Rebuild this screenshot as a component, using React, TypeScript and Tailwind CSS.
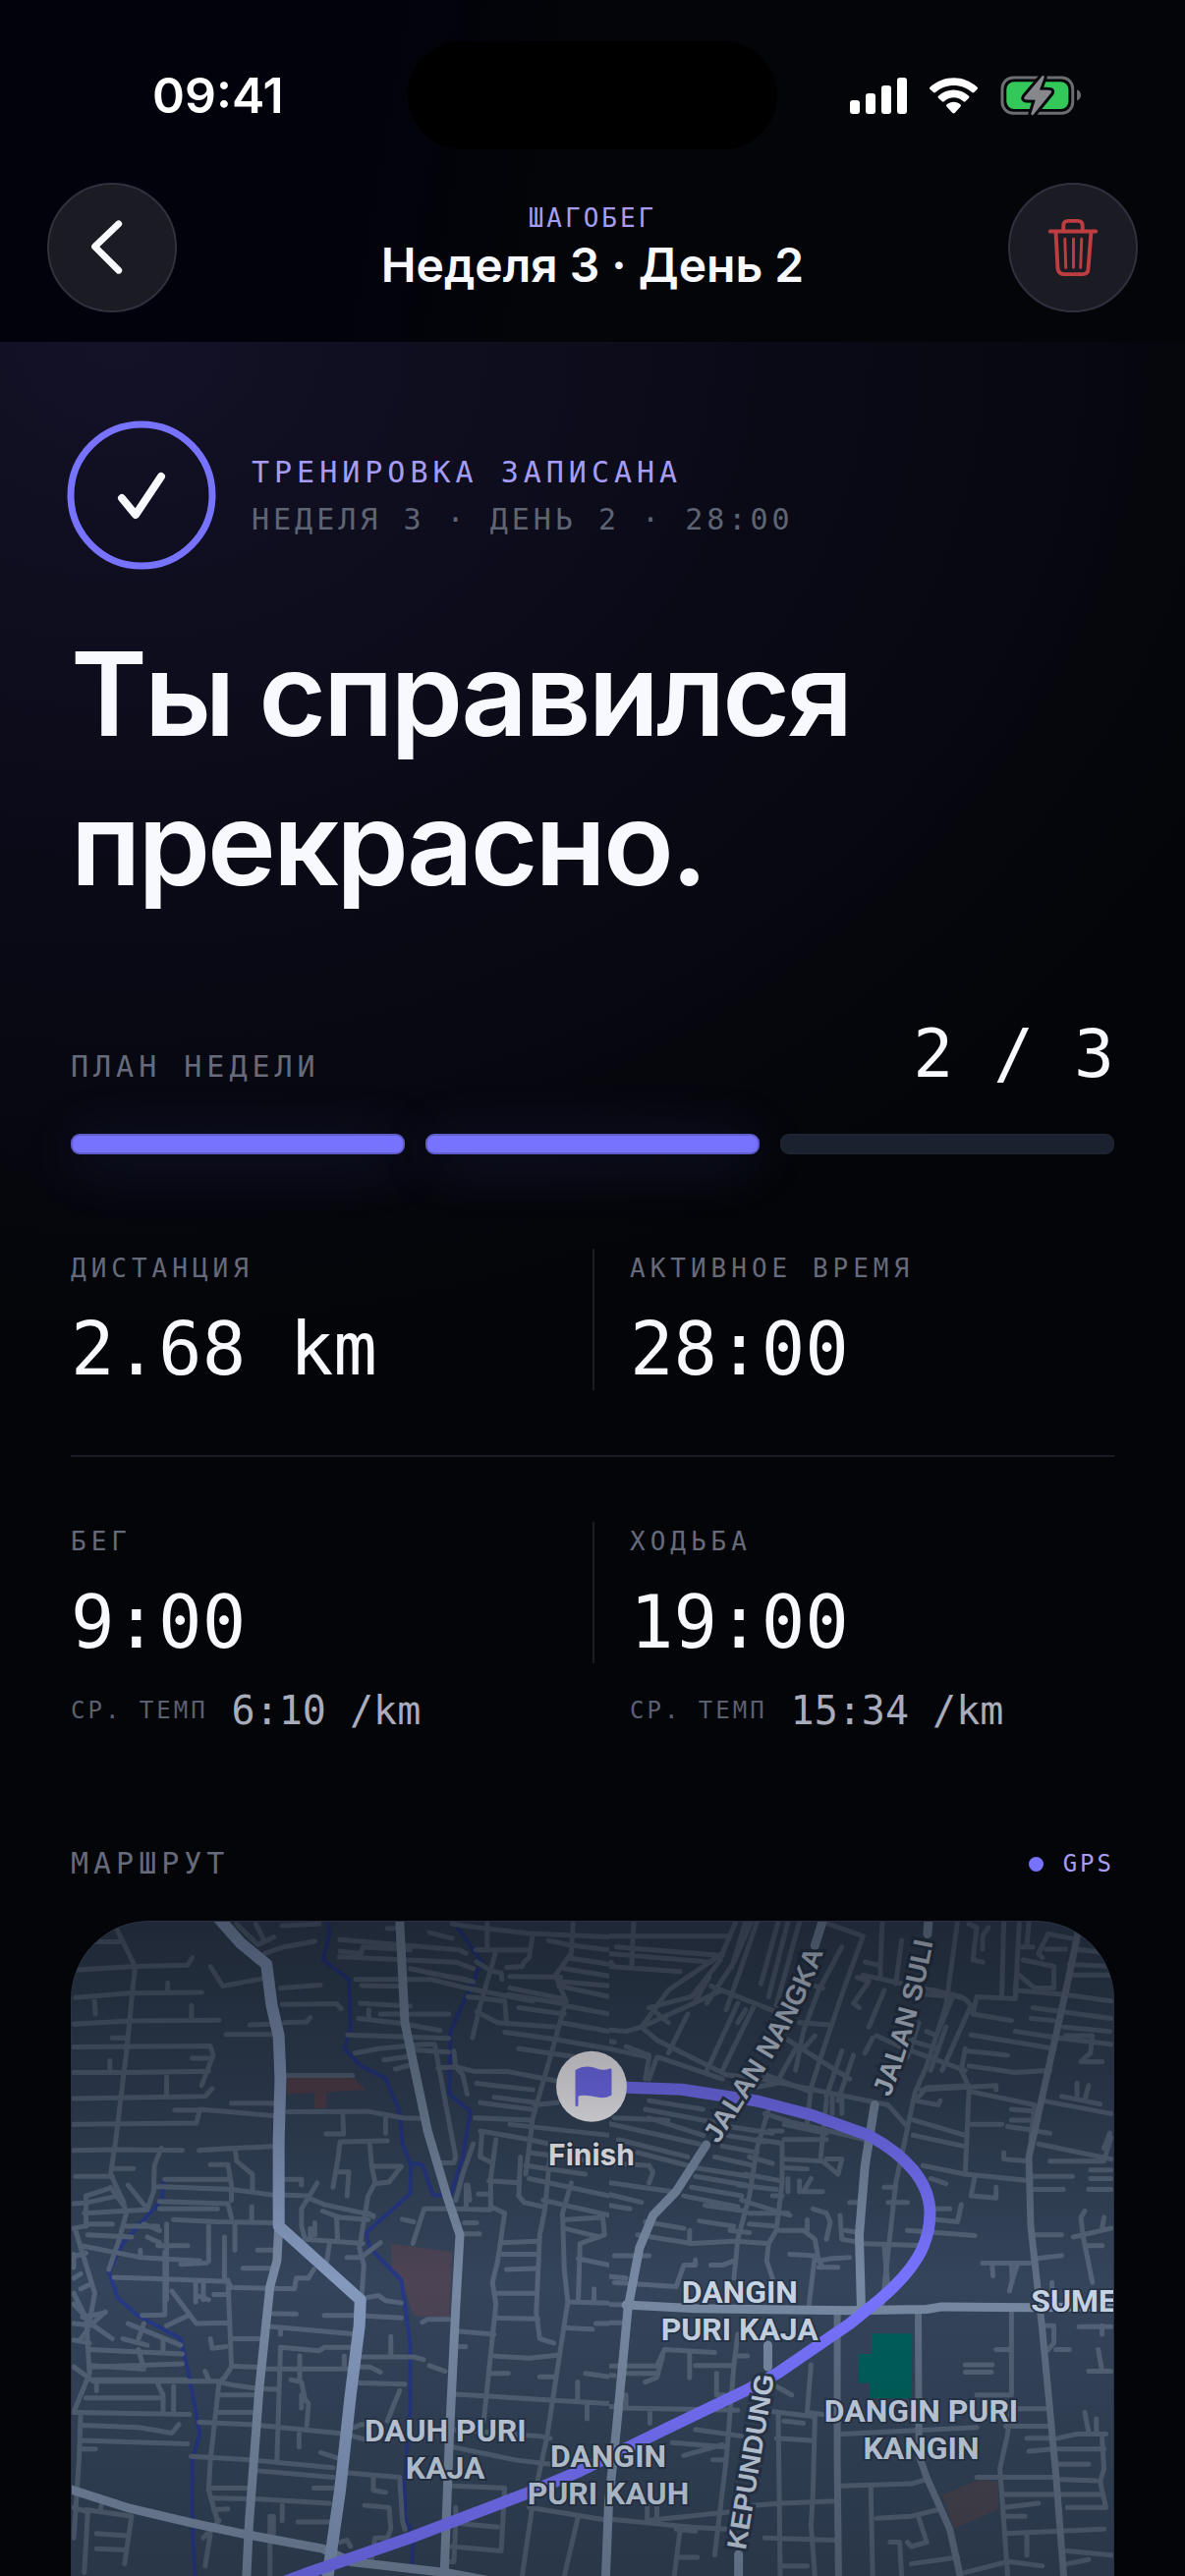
import React from "react";

const MONO = "font-['DejaVu_Sans_Mono','Liberation_Mono',monospace]";

/* Street geometry, west half of the tile */
const WEST_STREETS = [
  "M160 70L215 160L190 360L160 560L145 640L180 700L190 730L170 790L140 860",
  "M80 103H170M50 168L215 160L365 157L378 140M45 232L200 222L405 220M308 220V198M98 230L102 270",
  "M40 293L200 286L455 284M376 284V250M150 325H195M40 346L430 344L438 365L405 435M378 372H435M40 405L200 405L425 402M143 405V378",
  "M40 465L415 460L435 442M305 460V415M40 525L390 522L400 490L610 505M328 492H395M490 476H610M40 585L160 583L350 585M398 585L500 580L608 576",
  "M475 317H610M542 295L610 293M430 160L465 205L580 188M505 62L565 110L612 92M560 62L580 95M585 130L640 115L728 102M635 66L740 62",
  "M630 210L744 203M635 248L790 246L803 258M640 290L705 288L715 278M650 412H836M650 496L880 495L980 510L1030 511",
  "M800 98L1140 122L1160 130M798 138L1130 150L1180 165M800 125L860 130L865 115L1000 122M845 190H1060L1160 210L1350 240M862 204L970 206",
  "M858 245L1000 252M882 280V260M915 270H1110M853 280L980 292L1085 308M822 318L1110 326M843 360L910 350L1040 340L1070 340L1130 600L1125 614L1085 614",
  "M935 72H955M925 376L995 368M958 397L1000 388M1000 352L1110 358M1080 395L1130 392L1180 402L1280 403L1420 425M1125 355L1130 392L1150 410L1163 455",
  "M1055 82L1120 95M1120 62L1190 70L1340 84L1568 92M1220 62V118M1188 122H1340M1350 85L1340 140L1325 150L1320 160L1275 162M1245 125L1200 250L1178 325",
  "M1000 165L1180 195M1050 175L1160 190M1190 150L1230 170L1260 175L1262 190M1285 183L1430 185M1465 62L1460 130L1415 180L1445 240L1400 370L1350 510L1330 640",
  "M1395 100L1450 110L1568 122M1450 140L1568 155M1440 165L1568 182M1430 195L1568 205M1425 205L1568 230",
  "M1285 210L1440 235M1280 225L1430 245M1165 230L1270 240L1275 290M1310 255L1440 270M1190 265L1250 290L1420 300M1270 312L1410 328L1568 350M1310 350L1568 380M1440 250L1568 270M1430 290L1568 310",
  "M1190 430L1350 445M1200 475L1345 490M1240 462L1360 475M1185 510L1345 515M1285 525L1568 550M1200 540L1340 560M1170 700L1165 665M1355 480L1420 475M1205 545L1200 600L1230 612",
  "M1340 560L1480 585M1340 590L1568 615M1245 560L1230 650L1230 715L1270 730L1250 840L1235 890L1245 940L1210 1210M1225 655L1310 660M1315 600L1310 690L1325 705L1380 715",
  "M1330 620L1500 640M1400 590L1385 720L1370 780L1360 960L1370 1020L1410 1030M1460 660L1435 730L1440 860L1450 935L1430 1040L1390 1250L1350 1400L1320 1568",
  "M1340 650L1568 690M1380 700L1568 735M1445 745L1550 740L1555 780L1485 800L1480 930M1450 935L1568 938M1525 935V905M1480 835L1568 850M1440 765L1540 785",
  "M1260 798L1365 795M1255 825H1365M1275 860L1360 858M1250 915H1360M1245 972L1365 974M1140 1003L1240 1010M1240 1060L1340 1065L1420 1058M1445 995L1520 998M1500 1100L1568 1108M1530 985H1568",
  "M1130 720L1230 722M1160 720V665M1195 686H1230M1155 752H1190M1155 778H1198M1140 1038H1158M1130 1148L1400 1162L1568 1170M1230 1100H1280M1370 1108H1410M1478 1165V1120M1505 1205V1170",
  "M1180 570L1150 640L1130 700M978 744L1010 750M1130 720H1040L1008 800M1110 975H1050L1035 982M945 1015V1060M865 1062H1010L1038 1068M1055 1082L1100 1095",
  "M155 627H210M45 645L150 645M290 580L270 620L268 680L250 720L195 665M300 652H480M275 668L490 675L610 688M285 703L480 708L490 740M285 720H450",
  "M430 618H480L490 665V700M398 585L500 580L505 610L550 640V680M325 745L450 750L610 752M548 715V750M500 755V815M470 785V880M425 760V840",
  "M75 690L145 672M75 690V760M40 708L75 706L165 690M70 730L180 725L250 722M40 765L70 760M145 670L180 710M45 770L100 915L85 980M75 755H150",
  "M80 780L205 785M60 805L230 832L400 840M190 760H280M240 755L285 770M250 785L285 798M280 805H365M230 815V832M345 848L420 845M305 755V930",
  "M155 878L300 882L480 888L490 902M300 820V965L235 966M320 910L390 985L480 983M388 885V935M410 890V930M390 920L425 930M305 990L370 965M480 885L490 1080M440 918H480",
  "M40 855V825M40 880L60 870M40 830L75 822M40 915L80 980L150 1020M60 905L85 895M65 970L130 960M100 980L130 958M80 1000L60 1020M40 985L100 990M40 940L75 970L85 1100L40 1190",
  "M195 985L345 1035M240 985L225 1020M180 1020L250 1035M295 1020V1045M85 1045L350 1055M85 1082L235 1090M40 1023L85 1030M90 1085L350 1078M225 1045L240 1090M40 1085L90 1115H360",
  "M95 1118L450 1118M105 1140V1120M280 1125L295 1150V1185M75 1157H285M325 1130V1185M45 1190L370 1195M60 1220L225 1225L320 1238L340 1218M60 1255L365 1263M65 1275H102M60 1190L55 1300L40 1480",
  "M490 1020H570M430 1020L435 1042L475 1038M490 1083L570 1086M415 1095L425 1115M490 1085L470 1110L455 1120L430 1300L425 1370L450 1440M455 1120L500 1128L565 1135L620 1137M450 1150H560M450 1190H550",
  "M398 1213L545 1218L820 1240M375 1292L545 1300L780 1318M565 1325L780 1340M430 1365H540M435 1388L540 1390M560 1390L770 1400M440 1415L480 1413M430 1470L415 1545M455 1440L410 1480",
  "M500 902L670 905L675 880L710 880L725 860M565 815H615M523 857H605M610 962L675 963M605 992L850 1010M630 1000V1010M630 1040L740 1048L755 1040H840M630 1040L620 1300M590 1090H820M755 966H840M812 1060V1090",
  "M685 1060V1110M660 1115L690 1120L700 1160L710 1170L705 1220M690 1150V1180M683 1240V1270M745 1283L810 1300M725 1365H780M680 1443H780M635 1405V1440M610 1430V1470M600 1430V1568",
  "M645 652H690V665M735 660L705 700L690 720V760L700 790L865 800M710 695L755 710L895 735M750 725L800 740L880 745M790 740L793 790M715 785V765M728 780V752M770 800L760 850M645 688L710 690",
  "M760 547H810L808 505M800 565L935 563M800 565L795 600L780 670M790 635H825L820 690M930 510V545M885 570L890 620L900 660L880 690L870 740L855 810L868 850L862 920M895 622L975 622L940 658L900 662M880 730L895 738",
  "M820 832H860L915 798M875 925L910 920L930 932L975 937M870 967L975 972M850 1122L985 1125M970 1140L935 1210M840 1225L860 1218H880M835 1245L870 1252M860 1085L885 1085L915 1097",
  "M820 1330L970 1340L978 1440L985 1460M895 1335V1370L930 1375M870 1405L940 1410L945 1460L935 1480L900 1480L890 1530M800 1490L820 1485L830 1500M1115 1360L1270 1365L1260 1510L1120 1500",
  "M1120 1270L1300 1300L1400 1310M1130 1410V1450L1125 1535L1110 1535M1115 1445L1250 1455M1480 1430L1440 1568M1340 1410L1568 1440M1120 1230L1370 1245L1400 1250",
  "M40 1410L80 1420L70 1560M75 1415L205 1430L185 1540M105 1470L190 1475M105 1505L190 1508M115 1420L120 1400",
];

/* Street geometry, east half of the tile */
const EAST_STREETS = [
  "M140 57L135 155M0 90H390M95 115L370 135M0 125L340 150M0 155L260 172M80 150L90 160M405 57L370 130L230 215L160 300L120 310L0 300M365 145L290 230L180 255",
  "M445 57L400 150L330 245M460 57L420 160L380 260M515 57L470 200M540 57L490 230M570 57L510 250M430 57L395 160M335 185L300 240M340 205L510 265M370 215L160 300L200 330L380 410L470 420L800 480L850 530",
  "M280 270L230 360M410 245L330 400M450 255L370 400M200 370L180 420M205 370L370 420M190 260L230 290M0 335L180 370L170 420M0 320L90 335",
  "M120 345L180 365M645 62L735 90L690 200L640 330L600 440L590 520M680 115L620 215L580 310L560 400M610 205L630 210M740 150L780 158L785 57M735 180L890 210L990 230M780 160V180",
  "M720 185L750 195L710 245L725 255M790 215L750 300M835 100L820 200M570 290L650 295M430 260L410 290M540 330L700 420M560 350L510 430L450 440M680 355L640 460M610 320L580 350M710 365L670 470",
  "M480 410L600 450M655 460V500M680 465V500M770 320L830 345L1000 400M850 220L960 230M920 215L1000 235L1015 250L940 400M760 325L740 360M850 330L930 350M880 290L850 370",
  "M980 57L950 250L900 390L870 450L820 660L785 940M1010 62L1030 70L1020 145L1045 150M1060 70L1045 90V120M1100 57L1095 225M1030 230L1130 235L1140 62M1135 160L1130 215L1260 225L1378 240M1020 270L1120 285",
  "M970 225L925 320L900 310M1030 230L1020 270M950 300L910 400M965 235L940 290M1165 60L1160 110M1140 115H1175M1200 140L1190 130L1215 85L1275 95M1210 120H1260M1150 145L1230 160V210L1180 210L1140 180M1285 120L1378 130M1175 255L1378 280",
  "M1310 57L1375 110M1270 155L1378 160M1275 180H1378M1170 280L1230 285M1015 318L1230 350M1130 310L1240 325L1378 340M1255 300L1375 310M1260 320H1330L1325 360L1300 380H1355M1000 355L1110 365M1010 390L1130 405L1220 400",
  "M1000 350L990 400L1010 440L1000 640M885 445L1080 435M1080 445V435M1010 435L900 440L870 470L930 480L935 470M1020 450L1180 480M1120 490L1190 495M1120 515H1190M1110 530L1190 540M865 515L1000 550M1010 525H1095M865 550L995 575",
  "M1180 480L1170 560M1200 470L1378 500M1180 540L1220 545M1190 570L1378 605M1378 555L1360 610L1220 610M1290 430V460M1320 435L1310 470M1250 460L1350 478M1100 590V605L1160 610M890 620L1000 640L1170 655M1170 645H1278M1175 675H1255",
  "M1025 645L1015 690L1080 695V670M1325 630H1378M1325 650H1378M1320 675H1378M1375 545L1360 580M910 650L950 662M920 720H960M925 745L980 750L990 710M850 770L1025 782M790 670H820M800 705H850M700 705H730",
  "M1175 780H1250M1180 835L1250 828M1280 785L1378 765M1360 740L1355 765M1310 725L1300 740L1305 780L1330 890M1315 805H1355M1045 845L1170 845M1070 850L1072 875M1135 850L1120 890L1115 910M1120 850L1122 890M1225 890V905",
  "M1295 992H1378M1120 955V1145M1030 1150H1120M1080 1045H1120M1000 1080H1070M1000 1097H1068M1205 990H1230V1030L1215 1045M1235 1045H1270M1345 1045L1355 1095H1320M1360 1095H1378M1355 990V1010",
  "M490 490L460 580L440 690L410 790L400 880M480 500L550 520L740 560M490 540H525M460 560L520 568M530 525L640 545M640 470L625 600M530 560H640M525 570V660L510 770L490 800L485 840L500 880M385 530L500 545",
  "M380 550L480 565M370 575L460 590M350 600L450 620M300 625L440 645M300 645L430 665M290 670L420 690M270 690L410 715M325 712L430 725M310 748L400 760M390 770L440 775M440 730H540M440 755L510 760",
  "M530 605L630 610L670 640L680 605H640M530 625L590 628M540 650V680M570 655V680M600 650L580 680H630M525 690L500 690M440 600L500 615M430 640L520 655M410 665L510 675M420 700L545 735M370 850L400 840M340 850H370",
  "M405 795L490 800M520 770L580 770L610 790L620 840L650 835L700 832M590 770V745M605 720L640 730L650 750L640 790M675 735L680 790L710 795M620 855H670M545 825L610 828L595 940M630 855L615 830M720 800L900 805M690 770L725 775M790 810L800 905",
  "M180 620L190 635L180 660M170 750L270 765M150 780L290 800L400 795M285 770V800M90 828H180M90 890L250 900L270 850L300 850V838M35 900V940M0 870L120 880M0 740L60 740V780L10 800L0 860M0 700L130 720M0 670L160 705M0 650L240 680M30 540V520M0 610L180 620",
  "M180 470L320 490M170 490L350 520M180 510L320 550M60 520L310 570M90 510L230 515M100 560L280 600M150 590L280 620",
  "M0 938L113 942M0 1000L30 1000M40 983H115M80 1083H200L220 1045L350 1052M285 1055V1110M300 1082H395M120 1100H200M215 1060L200 1110L170 1120M20 1100L90 1105M120 1150V1180L0 1170M110 1180L410 1185M182 1190V1215M18 1180V1200",
  "M355 1100V1150H375M410 1060H435M510 1130L550 1150M600 1080L590 1190L630 1195M410 1010L400 1080L380 1300L350 1520M300 1230L420 1245M240 1260L380 1270M345 1300H380M270 1290L370 1265M470 1185L610 1200L605 1380L600 1450L610 1568",
  "M510 1250L600 1255M515 1195L520 1568M450 1405L520 1400L665 1395M480 1480L660 1485M530 1210L580 1215M680 1240L1030 1225M680 1360L860 1355L900 1345M755 1360L760 1568M770 1435L860 1430L930 1415M880 1435L900 1490L860 1500L850 1490",
  "M805 1490H830L835 1568M860 1540L980 1525M1120 1180L1110 1240L1090 1320L1100 1440L1110 1568M1110 1182H1220M1105 1222H1220M1160 1250H1230M1165 1280L1230 1275M1030 1340H1090M1100 1340H1230M1100 1380H1230M1105 1470L1360 1460M1160 1475V1520",
  "M1240 1250L1290 1240H1365M1240 1275H1360M1240 1310H1320M1355 1250L1360 1320L1350 1350L1365 1410M1250 1345L1340 1348M1250 1380H1350M1265 1410H1360M1310 1190L1320 1235M1340 1205V1235M1100 1410L1190 1400M1105 1430H1155",
  "M1265 1510L1380 1520M1115 1535L1200 1545M1265 1540L1320 1530M1000 1560L1110 1535M250 1460L300 1465M260 1465L245 1568M260 1525H305M390 1420L175 1440V1400M0 1430L290 1455L380 1460M200 1400V1440M520 1545H590",
];

const MAIN = {
  boulevard: "M455 50L515 105L590 155L605 250L625 320L630 420L625 560V760L858 930L855 990L830 1150L800 1370L765 1568L760 1620",
  west: [
    "M625 760L620 840L600 900L570 1130L540 1450L530 1620",
    "M970 50L985 290L1050 540L1105 690L1142 780L1130 950L1112 1250L1095 1620",
    "M30 1368L200 1412L375 1445L530 1472L750 1505L830 1535L1100 1560L1300 1590",
  ],
  east: [
    "M632 50L610 112",
    "M328 572L250 680L190 735L155 810L125 950L95 1230L75 1400L65 1620",
    "M905 50L902 85",
    "M765 480L740 620L725 780L730 945",
    "M120 942L300 950L700 955L900 952L940 946L1180 948L1380 945",
    "M488 1035V1085",
    "M412 1518V1620",
  ],
  secondary: [
    "M668 955V1300L672 1620",
    "M1300 50L1265 200L1165 600L1170 760L1200 1000L1235 1330L1260 1620",
    "M878 960L880 1290L900 1340L960 1460L1000 1620",
  ],
};

const RIVERS = [
  "M765 50L770 85L752 145L825 190L830 300L812 350L860 390L930 418L970 495L978 570L1003 620L1000 685L875 775L885 810L975 885L1000 1030V1180L985 1340V1430L1010 1480L1005 1545",
  "M1130 65L1205 150L1160 230L1115 310L1112 455L1172 495L1150 600L1115 690L1065 688L1035 618L1003 615",
  "M298 655L290 700L180 800L140 865L165 925L220 965L345 1020L370 1110L400 1240L378 1300L380 1480L390 1620",
];

const ROUTE =
  "M540 168L622 171L667 178L700 183L754 197L813 218C850 238 875 265 875 297C875 330 858 356 824 385L793 410L720 460L691 476L604 518L518 560L466 582L345 628L238 665L160 694";

function Streets({ paths, color, width }: { paths: string[]; color: string; width: number }) {
  return (
    <g fill="none" stroke={color} strokeWidth={width} strokeLinecap="round" strokeLinejoin="round">
      {paths.map((d) => (
        <path key={d} d={d} vectorEffect="non-scaling-stroke" />
      ))}
    </g>
  );
}

function District({ x, y, lines, anchor = "middle" }: { x: number; y: number; lines: string[]; anchor?: "middle" | "start" }) {
  return (
    <text
      textAnchor={anchor}
      className="fill-[#c8d5e5] stroke-[#28364a] stroke-4 text-[32px] font-bold font-['Roboto',sans-serif] [paint-order:stroke]"
    >
      {lines.map((line, i) => (
        <tspan key={line} x={x} y={y + i * 38}>
          {line}
        </tspan>
      ))}
    </text>
  );
}

function RouteMap() {
  const west = "translate(-12 -25) scale(.3571 .4413)";
  const east = "translate(518 -25) scale(.3929 .4413)";
  return (
    <svg viewBox="0 0 1062 667" preserveAspectRatio="xMidYMin slice" className="size-full" role="img" aria-label="Маршрут">
      <defs>
        <linearGradient id="shade" x1="0" y1="0" x2="0" y2="1">
          <stop offset="0" stopColor="#05070c" stopOpacity=".46" />
          <stop offset=".25" stopColor="#05070c" stopOpacity=".28" />
          <stop offset=".55" stopColor="#05070c" stopOpacity="0" />
          <stop offset="1" stopColor="#05070c" stopOpacity=".22" />
        </linearGradient>
        <clipPath id="westClip"><rect width="548" height="667" /></clipPath>
        <clipPath id="eastClip"><rect x="548" width="514" height="667" /></clipPath>
        <path id="nangka" d="M659 227L703 157Q748 88 770 20" />
        <path id="suli" d="M834 179Q862 110 882 0" />
        <path id="kepundung" d="M687 641L718 452" />
      </defs>
      <rect width="1062" height="667" fill="#34445a" />
      <g transform={west}>
        <path d="M648 415L840 418L872 445L762 450V488H728V452L648 455Z" fill="#54404e" />
        <path d="M945 800L1120 820L1112 970L1010 968L975 880L948 860Z" fill="#4c4455" />
      </g>
      <g transform={east}>
        <path d="M940 1380L1040 1345L1085 1350V1415L970 1460Z" fill="#464450" />
        <path d="M757 1008H863L861 1158H752V1122H723V1055H757Z" fill="#00605b" />
      </g>
      <g clipPath="url(#westClip)">
        <g transform={west}>
          <Streets paths={RIVERS} color="#263886" width={4} />
          <Streets paths={WEST_STREETS} color="#546378" width={5} />
        </g>
      </g>
      <g clipPath="url(#eastClip)">
        <g transform={east}>
          <Streets paths={EAST_STREETS} color="#546378" width={5} />
        </g>
      </g>
      <g transform={east}>
        <Streets paths={MAIN.secondary} color="#5f6e84" width={7} />
        <Streets paths={MAIN.east} color="#7789a2" width={9} />
      </g>
      <g transform={west}>
        <Streets paths={MAIN.west} color="#7789a2" width={9} />
        <Streets paths={[MAIN.boulevard]} color="#8499bd" width={12} />
      </g>
      <path d={ROUTE} fill="none" stroke="#7873ff" strokeWidth="12" strokeLinejoin="round" />
      <g className="fill-[#c8d5e5] stroke-[#28364a] stroke-6 text-[28px] font-bold font-['Liberation_Sans',sans-serif] [paint-order:stroke]">
        <text><textPath href="#nangka">JALAN NANGKA</textPath></text>
        <text><textPath href="#suli">JALAN SULI</textPath></text>
        <text><textPath href="#kepundung">KEPUNDUNG</textPath></text>
      </g>
      <District x={381} y={530} lines={["DAUH PURI", "KAJA"]} />
      <District x={547} y={556} lines={["DANGIN", "PURI KAUH"]} />
      <District x={681} y={389} lines={["DANGIN", "PURI KAJA"]} />
      <District x={866} y={510} lines={["DANGIN PURI", "KANGIN"]} />
      <District x={978} y={398} lines={["SUME"]} anchor="start" />
      <circle cx="530" cy="168" r="36" fill="#fbfaff" />
      <path d="M515 187V152C524 147 531 150 538 152C543 153 546 153 549 151V176C541 180 535 177 528 176C523 175 519 175 515 177" fill="#7873ff" stroke="#7873ff" strokeWidth="3" strokeLinecap="round" strokeLinejoin="round" />
      <text x="530" y="248" textAnchor="middle" className="fill-[#fbfaff] stroke-[#28364a] stroke-4 text-[30px] font-bold font-['Inter',sans-serif] [paint-order:stroke]">
        Finish
      </text>
      <rect width="1062" height="667" fill="url(#shade)" />
    </svg>
  );
}

function StatusIcons() {
  return (
    <div className="flex items-center justify-end gap-[22px] pr-[105px]">
      <svg viewBox="75 117 174 111" className="h-[37px] w-[58px] fill-white" aria-hidden="true">
        <rect x="75" y="186" width="30" height="42" rx="9" />
        <rect x="123" y="165" width="30" height="63" rx="9" />
        <rect x="171" y="141" width="30" height="87" rx="9" />
        <rect x="219" y="117" width="30" height="111" rx="9" />
      </svg>
      <svg viewBox="315 116 153 113" className="h-[37px] w-[51px] fill-white" aria-hidden="true">
        <path d="M318 146C360 107 424 107 465 146Q468 149 465 152L455 162Q452 165 449 162C417 133 367 133 335 162Q332 165 329 162L318 152Q315 149 318 146Z" />
        <path d="M344 173C371 148 412 148 439 173Q442 176 439 179L428 190Q425 193 422 190C405 174 379 174 362 190Q359 193 356 190L344 179Q341 176 344 173Z" />
        <path d="M370 200C383 189 401 189 413 200Q416 203 413 206L395 226Q392 229 388 226L370 206Q367 203 370 200Z" />
      </svg>
      <svg viewBox="533 109 249 127" className="h-[42px] w-[83px]" aria-hidden="true">
        <rect x="538" y="118" width="217" height="110" rx="34" fill="none" stroke="#6c6d71" strokeWidth="9" />
        <path d="M768 155C784 160 784 184 768 189Z" fill="#6c6d71" />
        <rect x="551" y="131" width="191" height="84" rx="24" fill="#34c759" />
        <path d="M661 113L607 177Q602 185 611 186L640 187L627 229Q627 237 635 231L688 166Q693 158 684 157L653 156L667 118Q668 110 661 113Z" fill="#87888c" stroke="#030508" strokeWidth="18" paintOrder="stroke" strokeLinejoin="round" />
      </svg>
    </div>
  );
}

function RoundButton({ label, children }: { label: string; children: React.ReactNode }) {
  return (
    <button type="button" aria-label={label} className="flex size-33 items-center justify-center rounded-full border-2 border-[#30303e] bg-[#1b1c23]">
      {children}
    </button>
  );
}

function Header() {
  return (
    <header className="bg-[linear-gradient(100deg,#02020c_30%,#030508_48%)] pt-[42px] pb-[30px]">
      <div className="grid grid-cols-[1fr_376px_1fr] items-center text-white">
        <time className="pl-[155px] text-[50px] leading-none font-semibold">09:41</time>
        <div className="h-[110px] rounded-full bg-black" />
        <StatusIcons />
      </div>
      <div className="mt-[34px] flex items-center justify-between px-12">
        <RoundButton label="Назад">
          <svg viewBox="0 0 132 132" className="size-full" aria-hidden="true">
            <path d="M73 41L48 65L73 90" fill="none" stroke="#f8f9ff" strokeWidth="7" strokeLinecap="round" strokeLinejoin="round" />
          </svg>
        </RoundButton>
        <div className="pt-1 text-center">
          <p className={`${MONO} text-[26px] leading-8 tracking-[3px] text-[#a59df5]`}>ШАГОБЕГ</p>
          <h1 className="text-[48px] leading-16 font-semibold">Неделя 3 · День 2</h1>
        </div>
        <RoundButton label="Удалить">
          <svg viewBox="0 0 132 132" className="size-full" fill="none" stroke="#bd3d40" strokeWidth="4" strokeLinecap="round" strokeLinejoin="round" aria-hidden="true">
            <path d="M42 49H90M56 48V43Q56 38 61 38H71Q76 38 76 43V48M48 50L50 88Q51 94 57 94H76Q82 94 82 88L85 50" />
            <path d="M57.500 57L58.500 87M66.500 57V87M75 57L74 87" strokeWidth="3" />
          </svg>
        </RoundButton>
      </div>
    </header>
  );
}

type StatProps = { label: string; value: string; pace?: string; divided?: boolean };

function Stat({ label, value, pace, divided = false }: StatProps) {
  return (
    <div className={MONO}>
      <dl className={divided ? "h-36 border-l-2 border-[#191b25] pl-9" : "h-36"}>
        <dt className="text-[26px] leading-10 tracking-[5px] text-[#666a7a]">{label}</dt>
        <dd className="mt-[22px] text-[74px] leading-20">{value}</dd>
      </dl>
      {pace && (
        <p className={divided ? "mt-6 flex items-center gap-6 pl-[38px]" : "mt-6 flex items-center gap-6"}>
          <span className="text-[24px] leading-12 tracking-[3px] text-[#5c5f6e]">СР. ТЕМП</span>
          <span className="text-[40px] leading-12 text-[#a9adbb]">{pace}</span>
        </p>
      )}
    </div>
  );
}

export default function App() {
  return (
    <div className="flex min-h-screen flex-col bg-[#030508] font-['Inter',sans-serif] text-[#f8f9ff]">
      <Header />
      <main className="flex flex-1 flex-col bg-[radial-gradient(1300px_1050px_at_10%_0%,#131227_0%,#0b0b19_45%,#030508_100%)] px-[72px] pt-[84px]">
        <section className="flex items-center gap-10">
          <svg viewBox="0 0 144 144" className="size-36 overflow-visible" fill="none" strokeLinecap="round" strokeLinejoin="round" aria-hidden="true">
            <circle cx="72" cy="72" r="72" stroke="#7873ff" strokeWidth="7" />
            <path d="M52 75L66 92L92 53" stroke="#f8f9ff" strokeWidth="8" />
          </svg>
          <div className={`${MONO} pt-0.5 text-[30px] leading-12`}>
            <p className="tracking-[5px] text-[#a59df5]">ТРЕНИРОВКА ЗАПИСАНА</p>
            <p className="tracking-[4px] text-[#5f6473]">НЕДЕЛЯ 3 · ДЕНЬ 2 · 28:00</p>
          </div>
        </section>

        <h2 className="mt-[54px] text-[118px] leading-[152px] font-semibold tracking-tight">
          Ты справился
          <br />
          прекрасно.
        </h2>

        <section className="mt-[99px]">
          <div className={`${MONO} flex items-baseline justify-between`}>
            <h3 className="text-[30px] tracking-[5px] text-[#666a7a]">ПЛАН НЕДЕЛИ</h3>
            <p className="text-[68px] leading-20">2 / 3</p>
          </div>
          <div className="mt-[41px] grid grid-cols-3 gap-[21px]">
            <div className="h-[21px] rounded-[9px] border-2 border-[#5f5bc8] bg-[#7873ff] shadow-[0_8px_60px_#7873ff33]" />
            <div className="h-[21px] rounded-[9px] border-2 border-[#5f5bc8] bg-[#7873ff] shadow-[0_8px_60px_#7873ff33]" />
            <div className="h-[21px] rounded-[9px] border-2 border-[#202432] bg-[#1a2230]" />
          </div>
        </section>

        <section className="mt-24 grid grid-cols-2">
          <Stat label="ДИСТАНЦИЯ" value="2.68 km" />
          <Stat label="АКТИВНОЕ ВРЕМЯ" value="28:00" divided />
        </section>
        <hr className="my-[66px] border-t-2 border-[#191b25]" />
        <section className="grid grid-cols-2">
          <Stat label="БЕГ" value="9:00" pace="6:10 /km" />
          <Stat label="ХОДЬБА" value="19:00" pace="15:34 /km" divided />
        </section>

        <section className={`${MONO} mt-28 flex items-center justify-between`}>
          <h3 className="text-[30px] leading-10 tracking-[5px] text-[#666a7a]">МАРШРУТ</h3>
          <p className="flex items-center gap-5 text-[24px] leading-10 tracking-[3px] text-[#a59df5]">
            <span className="size-[15px] rounded-full bg-[#7873ff]" />
            GPS
          </p>
        </section>
        <div className="mt-[38px] min-h-0 flex-1 basis-[600px] overflow-hidden rounded-t-[80px] border-x border-t border-[#2b3140] bg-[#2a3747]">
          <RouteMap />
        </div>
      </main>
    </div>
  );
}
